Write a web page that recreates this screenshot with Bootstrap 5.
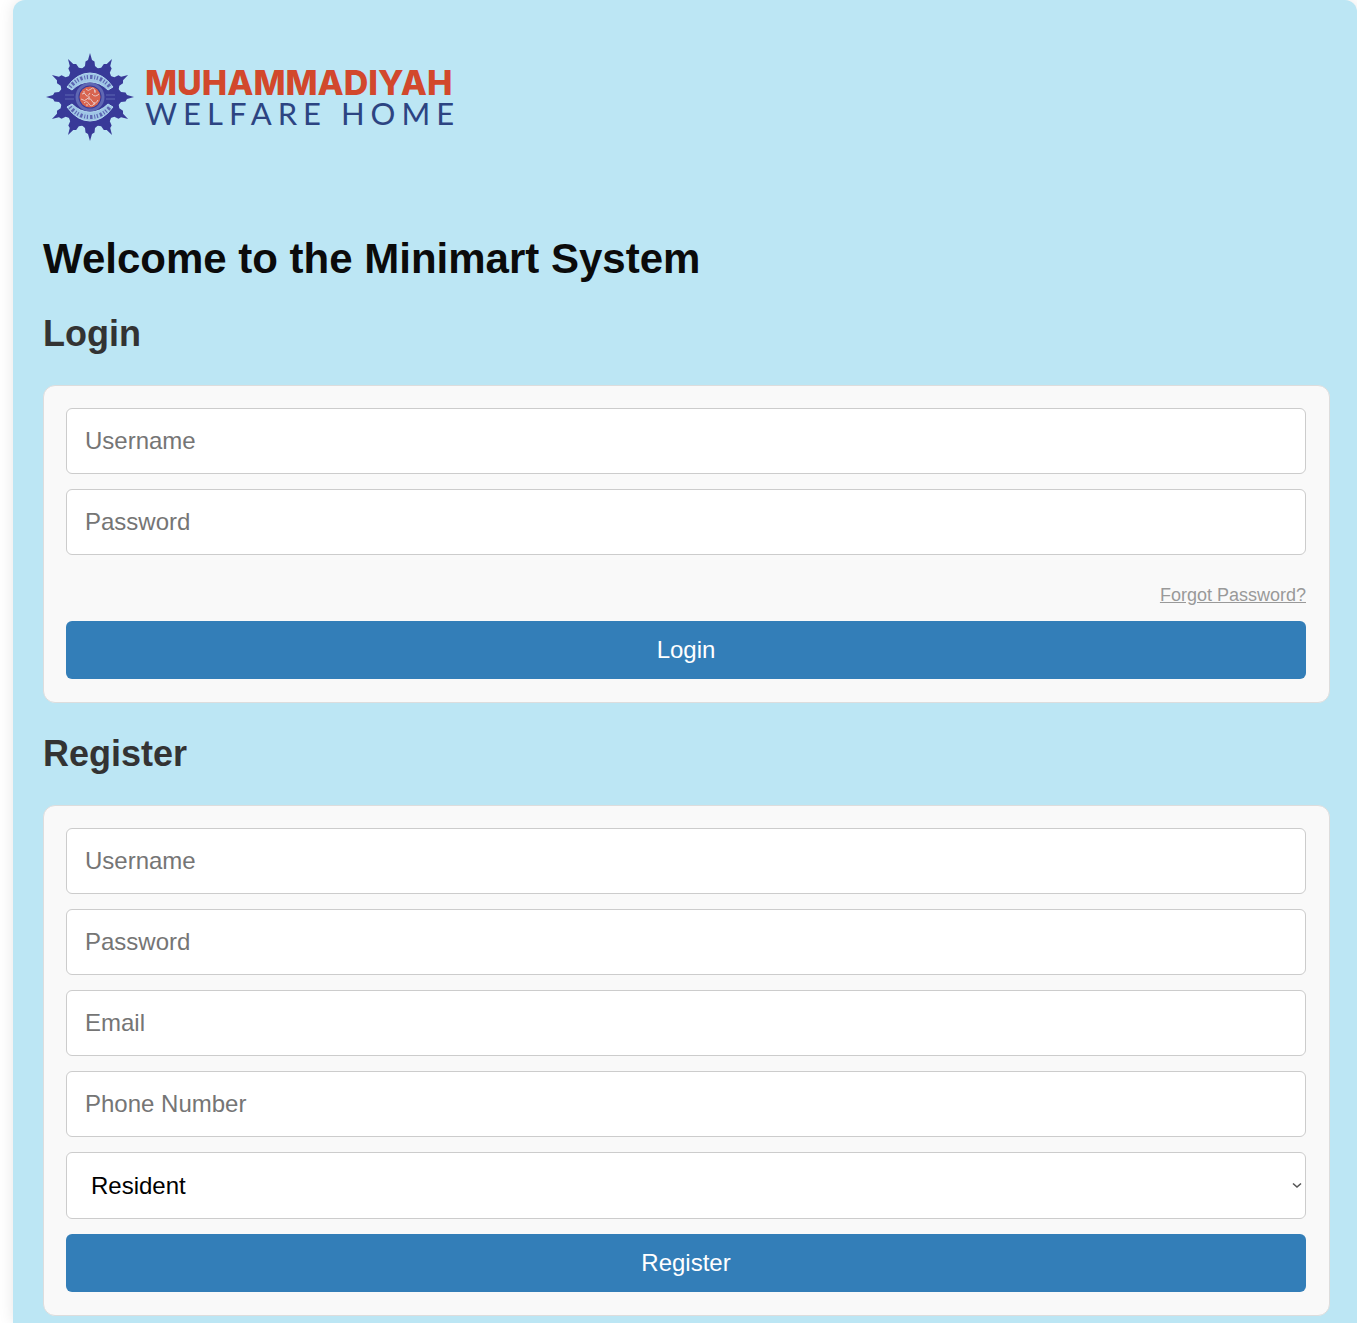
<!DOCTYPE html>
<html lang="en">
<head>
<meta charset="utf-8">
<meta name="viewport" content="width=device-width, initial-scale=1">
<title>Minimart System</title>
<link href="https://cdn.jsdelivr.net/npm/bootstrap@5.3.0/dist/css/bootstrap.min.css" rel="stylesheet">
<style>
  body { font-family: Arial, "Liberation Sans", sans-serif; background: #fff; }
  .page-panel {
    margin-left: 13px; padding: 52px 27px 7px 30px;
    background: #bce6f4; border-radius: 12px 12px 0 0;
    box-shadow: 0 0 15px rgba(0, 0, 0, .1);
  }
  .brand { gap: 11px; margin: 0 0 93px 3px; height: 90px; }
  .brand-top { font-family: Inter, sans-serif; font-size: 34px; line-height: 32px; font-weight: 800; color: #d2482c; }
  .brand-sub { font-family: Lato, sans-serif; font-size: 31px; line-height: 28px; color: #2c4482; letter-spacing: 6px; }
  h1 { font-size: 42px; line-height: 48px; font-weight: 700; color: #0b0b0b; margin: 0 0 30px; }
  h2 { font-size: 36px; line-height: 42px; font-weight: 700; color: #333; margin: 0 0 30px; }
  .form-box {
    background: #f9f9f9; border: 1px solid #ddd; border-radius: 12px;
    padding: 22px 23px 23px 22px;
  }
  .form-box + h2 { margin-top: 30px; }
  .stack { gap: 15px; }
  .field.form-control, .field.form-select {
    height: 66px; padding: 0 18px; font-size: 24px; line-height: 36px;
    border: 1px solid #ccc; border-radius: 6px; background-color: #fff; color: #000;
  }
  .field::placeholder { color: #757575; opacity: 1; }
  .field.form-select { height: 67px; padding: 0 24px; background-image: none; }
  .chevron { right: 4px; top: 30px; pointer-events: none; }
  .forgot { font-size: 18px; line-height: 20px; color: #999; }
  .forgot-row { margin: 30px 0 16px; line-height: 20px; }
  .action.btn {
    height: 58px; padding: 0; font-size: 24px; border: 0; border-radius: 6px;
    background: #337eb8; color: #fff;
  }
</style>
<script src="https://cdn.jsdelivr.net/npm/bootstrap@5.3.0/dist/js/bootstrap.bundle.min.js"></script>
</head>
<body>
<main class="page-panel min-vh-100">
  <div class="brand d-flex align-items-center">
    <svg width="88" height="90" viewBox="-44 -45 88 90" aria-hidden="true">
      <defs>
        <path id="ray" d="M0-44 2-37 4.500-35.500 5-31 8.500-28 0 0-8.500-28-5-31-4.500-35.500-2-37Z"/>
      </defs>
      <g fill="#383a98">
        <use href="#ray"/><use href="#ray" transform="rotate(30)"/><use href="#ray" transform="rotate(60)"/>
        <use href="#ray" transform="rotate(90)"/><use href="#ray" transform="rotate(120)"/><use href="#ray" transform="rotate(150)"/>
        <use href="#ray" transform="rotate(180)"/><use href="#ray" transform="rotate(210)"/><use href="#ray" transform="rotate(240)"/>
        <use href="#ray" transform="rotate(270)"/><use href="#ray" transform="rotate(300)"/><use href="#ray" transform="rotate(330)"/>
      </g>
      <circle r="27" fill="#383a98"/>
      <g fill="none" stroke="#b4dcf0">
        <path d="M-23-10Q-13-24 0-24T23-10L18-7Q10-15 0-15T-18-7ZM-23 10Q-13 24 0 24T23 10L18 7Q10 15 0 15T-18 7Z" fill="#9fc6e6" stroke-width="1"/>
        <path d="M-20-10Q-12-20 0-20T20-10M-20 10Q-12 20 0 20T20 10" stroke="#5c66b2" stroke-width="4" stroke-dasharray="1.200 2 2.400 1.800 1 1.600"/>
        <circle r="13" stroke="#5f68b4" stroke-width="3"/>
        <path d="M-25-2h9M-25 2h9M16-2h9M16 2h9" stroke="#5f68b4" stroke-width="1"/>
      </g>
      <circle r="10.500" fill="#d8644f"/>
      <g fill="none" stroke="#e8c5c2" stroke-width="1">
        <path d="M-8-3q3-2 4 1t4-2M-4-8q2 3 5 0t4 3M2-3q3 4 7 0M-9 2q4 3 6 0t5 2 6-1M-6 6q3-3 5 1t6-1M-1-1v4M5-7v3M-6-6v3M4 5v3M-3 7v2"/>
      </g>
    </svg>
    <div class="d-flex flex-column text-nowrap">
      <span class="brand-top">MUHAMMADIYAH</span>
      <span class="brand-sub">WELFARE HOME</span>
    </div>
  </div>

  <h1>Welcome to the Minimart System</h1>

  <h2>Login</h2>
  <form class="form-box">
    <div class="d-flex flex-column stack">
      <input class="form-control field" type="text" placeholder="Username" aria-label="Username">
      <input class="form-control field" type="password" placeholder="Password" aria-label="Password">
    </div>
    <div class="forgot-row d-flex justify-content-end"><a class="forgot" href="#">Forgot Password?</a></div>
    <button class="btn action w-100 d-block" type="button">Login</button>
  </form>

  <h2>Register</h2>
  <form class="form-box d-flex flex-column stack">
    <input class="form-control field" type="text" placeholder="Username" aria-label="Username">
    <input class="form-control field" type="password" placeholder="Password" aria-label="Password">
    <input class="form-control field" type="email" placeholder="Email" aria-label="Email">
    <input class="form-control field" type="tel" placeholder="Phone Number" aria-label="Phone Number">
    <div class="position-relative">
      <select class="form-select field" aria-label="Role"><option>Resident</option></select>
      <svg class="chevron position-absolute" width="10" height="7" viewBox="0 0 10 7" fill="none" stroke="#555" stroke-width="1.600" aria-hidden="true"><path d="M1 1.500 5 5 9 1.500"/></svg>
    </div>
    <button class="btn action w-100" type="button">Register</button>
  </form>
</main>
</body>
</html>
